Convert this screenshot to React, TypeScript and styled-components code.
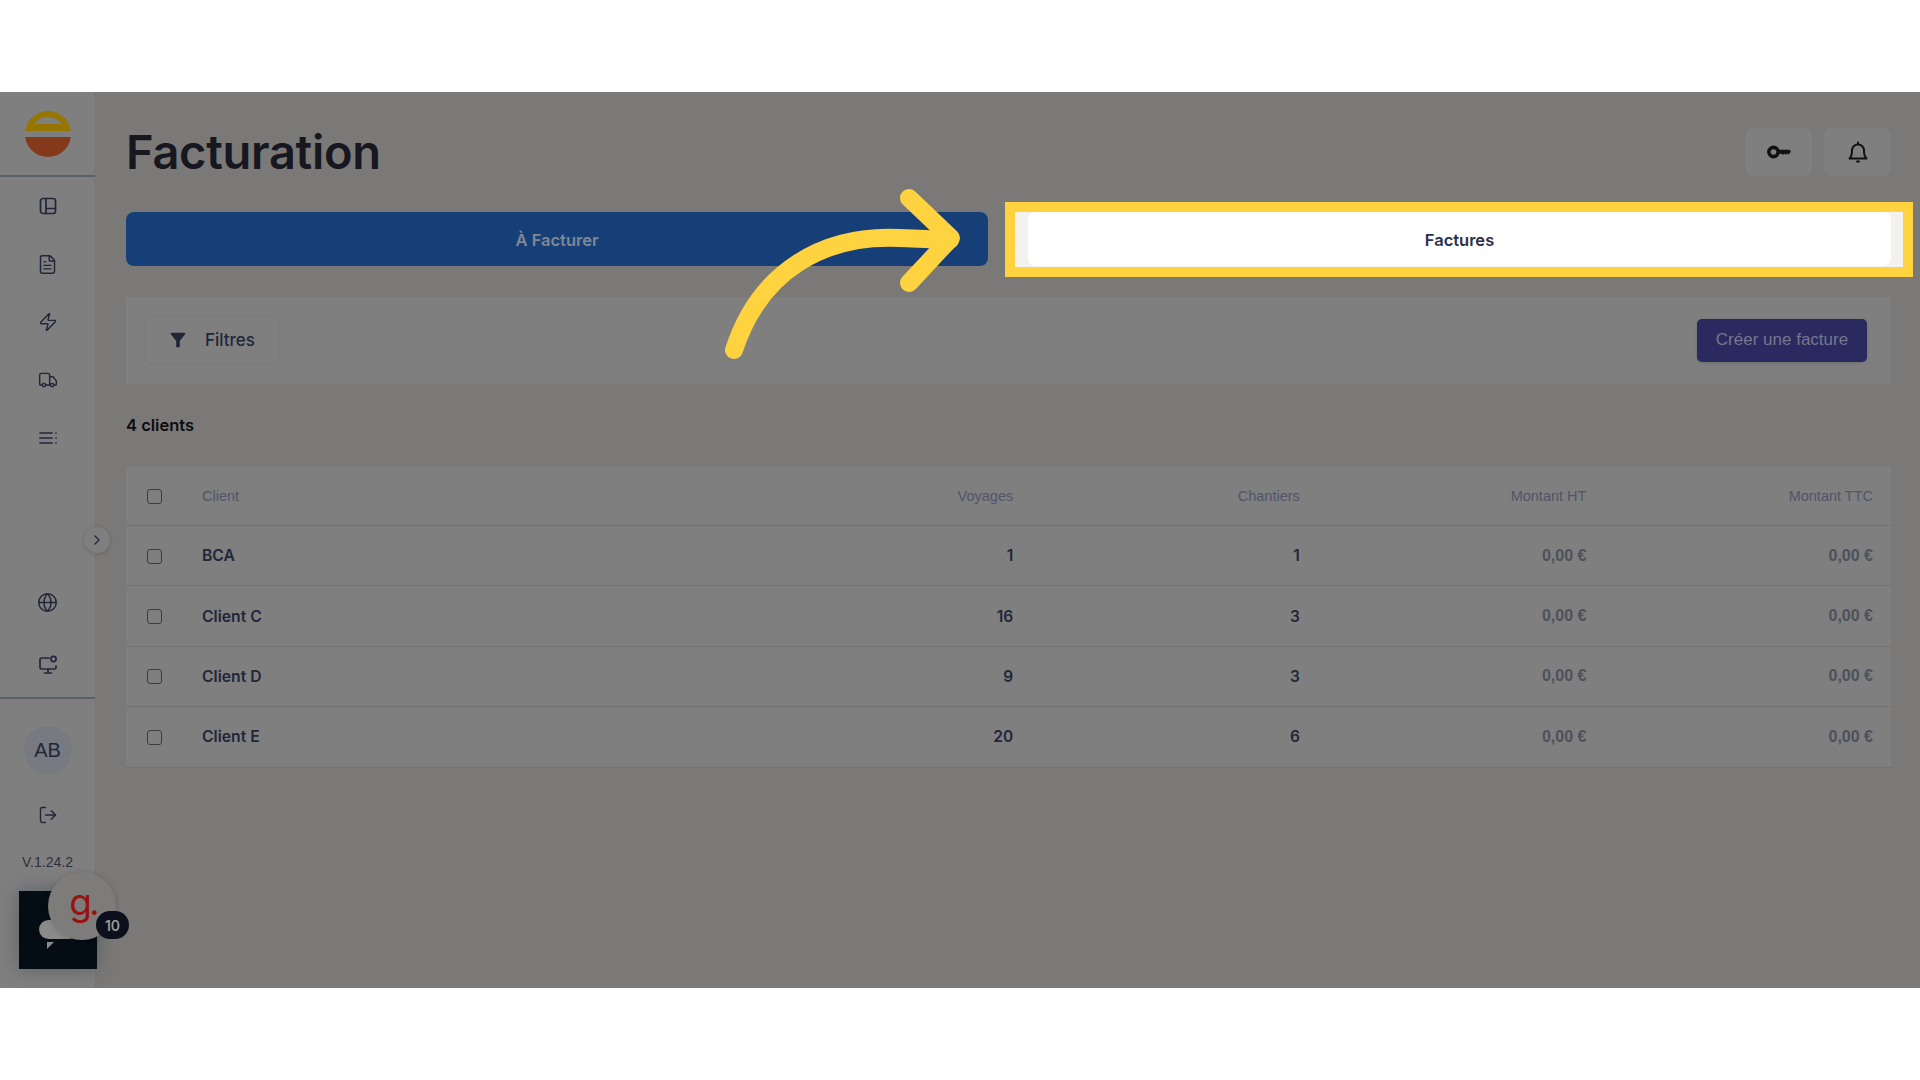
import React from 'react';
import styled, { createGlobalStyle } from 'styled-components';
import { ChevronRight, FileText, Globe, LogOut, Truck, Zap } from 'lucide-react';
import { MdFilterAlt } from 'react-icons/md';

const GlobalStyle = createGlobalStyle`
    html, body {
        margin: 0;
        background: #ffffff;
    }
    * {
        box-sizing: border-box;
    }
`;

const Page = styled.div`
    padding: 92px 0;
    height: 1080px;
    overflow: hidden;
`;

const Shell = styled.div`
    position: relative;
    display: flex;
    height: 896px;
    background-color: #7a7977;
    font-family: Inter, "Liberation Sans", sans-serif;
    color: #1a1c28;
    overflow: hidden;
`;

const Sidebar = styled.aside`
    width: 96px;
    flex-shrink: 0;
    display: flex;
    flex-direction: column;
    align-items: center;
    background-color: #7f7f7f;
    border-right: 1px solid #757678;
`;

const LogoBlock = styled.div`
    width: 100%;
    height: 85px;
    display: flex;
    align-items: center;
    justify-content: center;
    border-bottom: 2px solid #59606c;
`;

const NavList = styled.nav`
    display: flex;
    flex-direction: column;
    align-items: center;
    gap: 34px;
    padding-top: 17px;
`;

const NavIcon = styled.div`
    width: 24px;
    height: 24px;
    display: flex;
    align-items: center;
    justify-content: center;
    color: #22263a;
`;

const Spacer = styled.div`
    flex: 1;
`;

const BottomNav = styled.div`
    width: 100%;
    flex-shrink: 0;
    display: flex;
    flex-direction: column;
    align-items: center;
    gap: 39px;
    padding-bottom: 20px;
    border-bottom: 2px solid #59606c;
`;

const Account = styled.div`
    height: 289px;
    flex-shrink: 0;
    display: flex;
    flex-direction: column;
    align-items: center;
    padding-top: 27px;
`;

const Avatar = styled.div`
    width: 48px;
    height: 48px;
    border-radius: 50%;
    background-color: #777a80;
    display: flex;
    align-items: center;
    justify-content: center;
    font-family: "Liberation Sans", sans-serif;
    font-size: 20px;
    color: #22263a;
`;

const LogoutIcon = styled(NavIcon)`
    margin-top: 29px;
`;

const Version = styled.div`
    margin-top: 27px;
    font-family: "Liberation Sans", sans-serif;
    font-size: 14px;
    line-height: 16px;
    color: #2e3138;
`;

const ExpandButton = styled.div`
    position: absolute;
    left: 84px;
    top: 435px;
    width: 26px;
    height: 26px;
    border-radius: 50%;
    background-color: #7f7f7f;
    box-shadow: 0 1px 4px rgba(0, 0, 0, 0.18);
    display: flex;
    align-items: center;
    justify-content: center;
    color: #22263a;
`;

const ChatSquare = styled.div`
    position: absolute;
    left: 19px;
    top: 799px;
    width: 78px;
    height: 78px;
    background-color: #040c14;
    box-shadow: 0 0 18px rgba(40, 50, 70, 0.4);
`;

const ChatBubble = styled.div`
    position: absolute;
    left: 20px;
    top: 29px;
    width: 40px;
    height: 19px;
    border-radius: 10px;
    background-color: #8a8a8a;
`;

const ChatTail = styled.div`
    position: absolute;
    left: 28px;
    top: 51px;
    width: 0;
    height: 0;
    border-top: 7px solid #8a8a8a;
    border-right: 7px solid transparent;
`;

const GuideBubble = styled.div`
    position: absolute;
    left: 48px;
    top: 780px;
    width: 68px;
    height: 68px;
    border-radius: 50%;
    background-color: #7d7c7a;
    box-shadow: 0 1px 6px rgba(0, 0, 0, 0.15);
    display: flex;
    align-items: center;
    justify-content: center;
    padding: 0 0 9px 2px;
    font-family: Inter, "Liberation Sans", sans-serif;
    font-size: 37px;
    letter-spacing: -3px;
    color: #961310;
`;

const CountBadge = styled.div`
    position: absolute;
    left: 96px;
    top: 819px;
    width: 33px;
    height: 28px;
    border-radius: 14px;
    background-color: #0b101c;
    color: #9a9a9a;
    display: flex;
    align-items: center;
    justify-content: center;
    font-size: 14px;
    font-weight: 600;
`;

const Main = styled.main`
    flex: 1;
    min-width: 0;
    padding: 0 29px 0 30px;
`;

const Header = styled.header`
    height: 120px;
    display: flex;
    align-items: flex-start;
    justify-content: space-between;
`;

const Title = styled.h1`
    margin: 31px 0 0;
    font-size: 47px;
    line-height: 58px;
    font-weight: 600;
    letter-spacing: -0.3px;
    color: #16171f;
`;

const HeaderActions = styled.div`
    display: flex;
    gap: 12px;
    padding-top: 36px;
`;

const IconButton = styled.button`
    width: 67px;
    height: 48px;
    border: 0;
    border-radius: 8px;
    background-color: #7f7f7f;
    display: flex;
    align-items: center;
    justify-content: center;
    color: #101114;
    padding: 0;
`;

const Tabs = styled.div`
    display: grid;
    grid-template-columns: 862px 1fr;
    gap: 40px;
`;

const Tab = styled.div<{ $active?: boolean }>`
    position: relative;
    height: 54px;
    padding-top: 1px;
    border-radius: 8px;
    display: flex;
    align-items: center;
    justify-content: center;
    font-size: 16.5px;
    font-weight: 600;
    background-color: ${({ $active }) => ($active ? '#ffffff' : '#163e77')};
    color: ${({ $active }) => ($active ? '#2a3050' : '#7f8896')};
`;

const HighlightSlot = styled.div`
    position: relative;
    z-index: 1;
`;

const Spotlight = styled.div`
    position: absolute;
    left: -23px;
    right: -22px;
    top: -10px;
    bottom: -11px;
    border: 10px solid #ffd23f;
    background-color: #f4f2ee;
`;

const FilterBar = styled.div`
    margin-top: 31px;
    height: 87px;
    padding: 0 24px 1px 18px;
    background-color: #7f7f7f;
    display: flex;
    align-items: center;
    justify-content: space-between;
`;

const FilterButton = styled.button`
    width: 136px;
    height: 50px;
    border: 1px solid #7a7a7a;
    border-radius: 8px;
    background: transparent;
    display: flex;
    align-items: center;
    gap: 16px;
    padding: 0 0 0 22px;
    font-family: inherit;
    font-size: 17px;
    font-weight: 500;
    color: #22263a;
`;

const PrimaryButton = styled.button`
    width: 170px;
    height: 43px;
    border: 0;
    border-radius: 5px;
    background-color: #2a2960;
    box-shadow: 0 1px 3px rgba(0, 0, 0, 0.15);
    font-family: "Liberation Sans", sans-serif;
    font-size: 17px;
    color: #77778c;
`;

const Count = styled.div`
    margin-top: 31px;
    height: 20px;
    font-size: 16.5px;
    line-height: 20px;
    font-weight: 600;
    color: #0c0c0f;
`;

const Table = styled.div`
    margin-top: 31px;
    background-color: #7f7f7f;
`;

const Row = styled.div<{ $head?: boolean }>`
    display: grid;
    grid-template-columns: 55px 1fr repeat(4, 286.6px);
    align-items: center;
    height: ${({ $head }) => ($head ? '60px' : '60.4px')};
    padding: 0 18px 0 21px;
    border-bottom: 1px solid #727375;
    font-family: "Liberation Sans", sans-serif;
`;

const Check = styled.span`
    width: 15px;
    height: 15px;
    margin-top: 1px;
    border: 1.5px solid #3c3d40;
    border-radius: 3px;
`;

const HeadCell = styled.div<{ $right?: boolean }>`
    font-size: 14.5px;
    color: #50556a;
    text-align: ${({ $right }) => ($right ? 'right' : 'left')};
`;

const NameCell = styled.div`
    font-family: Inter, "Liberation Sans", sans-serif;
    font-size: 15.7px;
    font-weight: 600;
    color: #22263a;
`;

const NumberCell = styled.div`
    font-family: Inter, "Liberation Sans", sans-serif;
    font-size: 15.5px;
    font-weight: 600;
    text-align: right;
    color: #22263a;
`;

const AmountCell = styled.div`
    font-size: 16px;
    font-weight: 700;
    text-align: right;
    color: #4d515c;
`;

const ArrowLayer = styled.svg`
    position: absolute;
    left: 0;
    top: -92px;
    z-index: 2;
    pointer-events: none;
`;

const clients = [
    { name: 'BCA', trips: 1, sites: 1 },
    { name: 'Client C', trips: 16, sites: 3 },
    { name: 'Client D', trips: 9, sites: 3 },
    { name: 'Client E', trips: 20, sites: 6 },
];

const headers = ['Voyages', 'Chantiers', 'Montant HT', 'Montant TTC'];

const BoardIcon = () => (
    <svg width="20" height="20" viewBox="0 0 20 20" fill="none" stroke="currentColor" strokeWidth="1.7">
        <rect x="2.5" y="2.5" width="15" height="15" rx="2.5" />
        <path d="M8 2.5v15M8 12.5h9.5" />
    </svg>
);

const ListIcon = () => (
    <svg width="20" height="16" viewBox="0 0 20 16" fill="none" stroke="currentColor" strokeWidth="1.7" strokeLinecap="round">
        <path d="M2 3h12M2 8h12M2 13h12M18 3h.01M18 8h.01M18 13h.01" />
    </svg>
);

const RemoteIcon = () => (
    <svg width="22" height="22" viewBox="0 0 22 22" fill="none" stroke="currentColor" strokeWidth="1.7" strokeLinecap="round">
        <path d="M12 4H4.5A1.5 1.5 0 0 0 3 5.5v8A1.5 1.5 0 0 0 4.5 15h13a1.5 1.5 0 0 0 1.5-1.5V12M11 15v4M7.5 19h7" />
        <circle cx="16.5" cy="5" r="2.6" />
    </svg>
);

const KeyIcon = () => (
    <svg width="24" height="14" viewBox="0 0 24 14" fill="currentColor">
        <circle cx="6.5" cy="7" r="4.6" fill="none" stroke="currentColor" strokeWidth="3.6" />
        <path d="M10 4.8H22.5L24 6.8L22.5 8.6L21.3 9.6L20 8.6L18.8 10L17.4 8.6L16 10L14.8 8.8H10Z" />
    </svg>
);

const BellIcon = () => (
    <svg width="20" height="22" viewBox="0 0 20 22" fill="none" stroke="currentColor" strokeWidth="2" strokeLinecap="round" strokeLinejoin="round">
        <path d="M10 1.5V3M1.5 17.5H18.5C17 16 16 14.5 16 9.5A6 6 0 0 0 4 9.5C4 14.5 3 16 1.5 17.5Z" />
        <path d="M9 20.5H11" />
    </svg>
);

const LogoMark = () => (
    <svg width="46" height="46" viewBox="0 0 46 46">
        <path fillRule="evenodd" d="M0.2 20A23 23 0 0 1 45.8 20ZM9 13H37A17.5 17.5 0 0 0 9 13Z" fill="#957600" />
        <path d="M0.2 26H45.8A23 23 0 0 1 0.2 26Z" fill="#84391a" />
    </svg>
);

export default function App() {
    return (
        <>
            <GlobalStyle />
            <Page>
                <Shell>
                    <Sidebar>
                        <LogoBlock>
                            <LogoMark />
                        </LogoBlock>
                        <NavList>
                            <NavIcon><BoardIcon /></NavIcon>
                            <NavIcon><FileText size={21} strokeWidth={1.7} /></NavIcon>
                            <NavIcon><Zap size={20} strokeWidth={1.7} /></NavIcon>
                            <NavIcon><Truck size={20} strokeWidth={1.7} /></NavIcon>
                            <NavIcon><ListIcon /></NavIcon>
                        </NavList>
                        <Spacer />
                        <BottomNav>
                            <NavIcon><Globe size={21} strokeWidth={1.7} /></NavIcon>
                            <NavIcon><RemoteIcon /></NavIcon>
                        </BottomNav>
                        <Account>
                            <Avatar>AB</Avatar>
                            <LogoutIcon><LogOut size={20} strokeWidth={1.7} /></LogoutIcon>
                            <Version>V.1.24.2</Version>
                        </Account>
                    </Sidebar>

                    <Main>
                        <Header>
                            <Title>Facturation</Title>
                            <HeaderActions>
                                <IconButton><KeyIcon /></IconButton>
                                <IconButton><BellIcon /></IconButton>
                            </HeaderActions>
                        </Header>

                        <Tabs>
                            <Tab>À Facturer</Tab>
                            <HighlightSlot>
                                <Spotlight />
                                <Tab $active>Factures</Tab>
                            </HighlightSlot>
                        </Tabs>

                        <FilterBar>
                            <FilterButton>
                                <MdFilterAlt size={22} />
                                Filtres
                            </FilterButton>
                            <PrimaryButton>Créer une facture</PrimaryButton>
                        </FilterBar>

                        <Count>4 clients</Count>

                        <Table>
                            <Row $head>
                                <Check />
                                <HeadCell>Client</HeadCell>
                                {headers.map((label) => (
                                    <HeadCell $right key={label}>{label}</HeadCell>
                                ))}
                            </Row>
                            {clients.map((client) => (
                                <Row key={client.name}>
                                    <Check />
                                    <NameCell>{client.name}</NameCell>
                                    <NumberCell>{client.trips}</NumberCell>
                                    <NumberCell>{client.sites}</NumberCell>
                                    <AmountCell>0,00 €</AmountCell>
                                    <AmountCell>0,00 €</AmountCell>
                                </Row>
                            ))}
                        </Table>
                    </Main>

                    <ExpandButton><ChevronRight size={16} strokeWidth={2} /></ExpandButton>

                    <ChatSquare>
                        <ChatBubble />
                        <ChatTail />
                    </ChatSquare>
                    <GuideBubble>g.</GuideBubble>
                    <CountBadge>10</CountBadge>

                    <ArrowLayer width="1920" height="400" viewBox="0 0 1920 400" fill="none" stroke="#ffd23f" strokeWidth="18" strokeLinecap="round" strokeLinejoin="round">
                        <path d="M734 350C760 270 825 234 900 238L950 240" />
                        <path d="M909 198L951 238L909 283" />
                    </ArrowLayer>
                </Shell>
            </Page>
        </>
    );
}
